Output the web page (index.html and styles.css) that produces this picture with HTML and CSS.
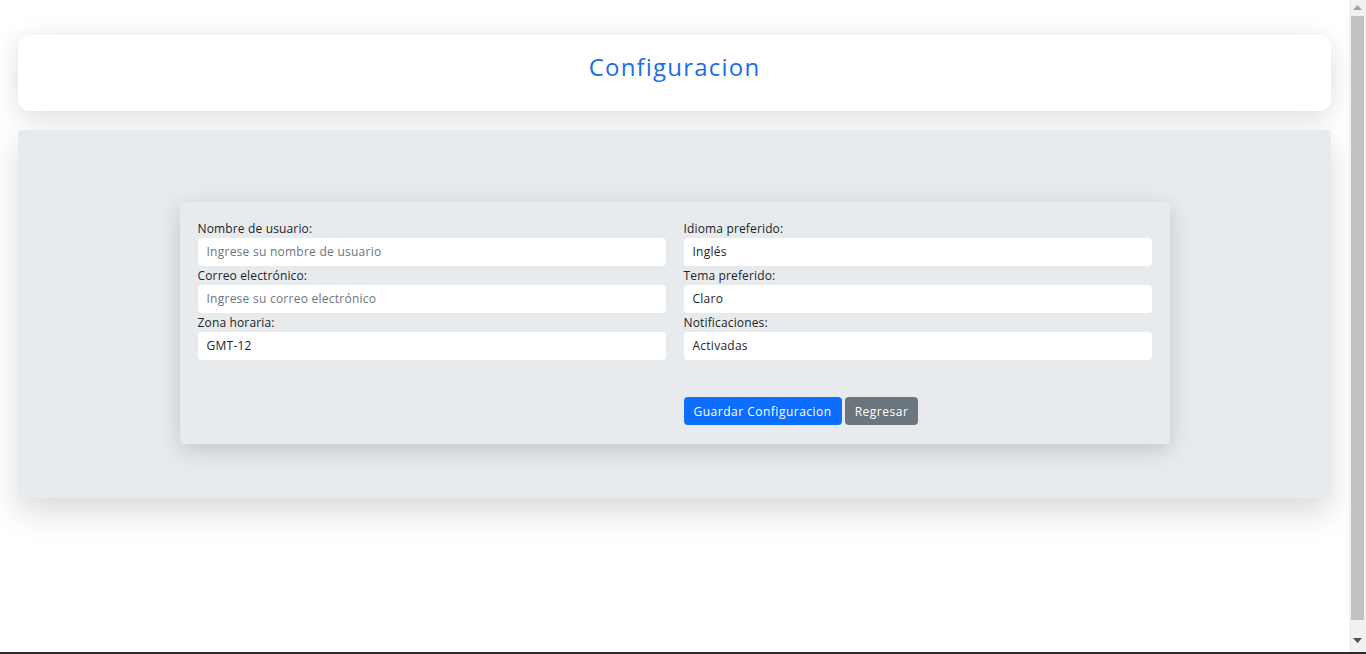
FILE: index.html
```html
<!DOCTYPE html>
<html lang="es">
<head>
<meta charset="utf-8">
<title>Configuracion</title>
<link rel="stylesheet" href="styles.css">
</head>
<body>
<div class="page">
  <header class="header-card">
    <h1 class="title">Configuracion</h1>
  </header>
  <main class="main-section">
    <form class="settings-card">
      <div class="column">
        <div class="field">
          <label class="label">Nombre de usuario:</label>
          <input class="input" type="text" placeholder="Ingrese su nombre de usuario">
        </div>
        <div class="field">
          <label class="label">Correo electrónico:</label>
          <input class="input" type="text" placeholder="Ingrese su correo electrónico">
        </div>
        <div class="field">
          <label class="label">Zona horaria:</label>
          <div class="input select">GMT-12</div>
        </div>
      </div>
      <div class="column">
        <div class="field">
          <label class="label">Idioma preferido:</label>
          <div class="input select">Inglés</div>
        </div>
        <div class="field">
          <label class="label">Tema preferido:</label>
          <div class="input select">Claro</div>
        </div>
        <div class="field">
          <label class="label">Notificaciones:</label>
          <div class="input select">Activadas</div>
        </div>
        <div class="actions">
          <button type="button" class="btn btn-primary">Guardar Configuracion</button>
          <button type="button" class="btn btn-secondary">Regresar</button>
        </div>
      </div>
    </form>
  </main>
</div>
<div class="scrollbar">
  <svg class="arrow arrow-up" width="9" height="5" viewBox="0 0 9 5"><polygon points="0,5 9,5 4.5,0" fill="#a3a3a3"/></svg>
  <div class="thumb"></div>
  <svg class="arrow arrow-down" width="9" height="5" viewBox="0 0 9 5"><polygon points="0,0 9,0 4.5,5" fill="#505050"/></svg>
</div>
<div class="taskbar"></div>
</body>
</html>
```

FILE: styles.css
```css
* { box-sizing: border-box; }

html, body {
  margin: 0;
  padding: 0;
  background: #ffffff;
}

body {
  font-family: "Open Sans", "Liberation Sans", sans-serif;
  color: #212529;
}

.page {
  padding: 35px 35px 180px 18px;
  display: flex;
  flex-direction: column;
  gap: 19px;
}

.header-card {
  background: #ffffff;
  border-radius: 12px;
  height: 76px;
  padding-top: 14px;
  box-shadow: 0 6px 26px rgba(0, 0, 0, 0.14);
}

.title {
  margin: 0;
  text-align: center;
  font-size: 24px;
  line-height: 36px;
  font-weight: 500;
  letter-spacing: 1.2px;
  color: #1a6fe6;
}

.main-section {
  background: #e7ebee;
  height: 368px;
  border-radius: 4px;
  padding-top: 72px;
  display: flex;
  justify-content: center;
  align-items: flex-start;
  box-shadow: 0 14px 32px rgba(0, 0, 0, 0.15);
}

.settings-card {
  width: 990px;
  background: #e8ebee;
  border-radius: 4px;
  padding: 17px 18px 19px 18px;
  display: flex;
  gap: 18px;
  box-shadow: 0 6px 22px rgba(0, 0, 0, 0.16);
}

.column {
  flex: 1;
  display: flex;
  flex-direction: column;
}

.field {
  display: flex;
  flex-direction: column;
}

.label {
  font-size: 12px;
  line-height: 19px;
  letter-spacing: 0.15px;
  color: #212529;
}

.input {
  height: 28px;
  border: none;
  border-radius: 4px;
  background: #ffffff;
  padding: 0 9px;
  font-family: inherit;
  font-size: 12px;
  line-height: 28px;
  letter-spacing: 0.25px;
  color: #212529;
  outline: none;
}

.input::placeholder {
  color: #6c757d;
}

.actions {
  margin-top: 37px;
  display: flex;
  gap: 3px;
}

.btn {
  height: 28px;
  border: none;
  border-radius: 4px;
  padding: 0 10px;
  font-family: inherit;
  font-size: 12px;
  letter-spacing: 0.5px;
  color: #ffffff;
}

.btn-primary { background: #0d6efd; }
.btn-secondary { background: #6c757d; }

.scrollbar {
  position: fixed;
  top: 0;
  right: 0;
  width: 17px;
  height: 100vh;
  background: #f1f1f1;
}

.arrow {
  position: absolute;
  left: 4px;
}

.arrow-up { top: 5px; }
.arrow-down { top: 638px; }

.thumb {
  position: absolute;
  top: 16px;
  left: 2px;
  width: 13px;
  height: 604px;
  background: #c1c1c1;
}

.taskbar {
  position: fixed;
  left: 0;
  right: 0;
  bottom: 0;
  height: 2px;
  background: #2b2b2b;
}
```
